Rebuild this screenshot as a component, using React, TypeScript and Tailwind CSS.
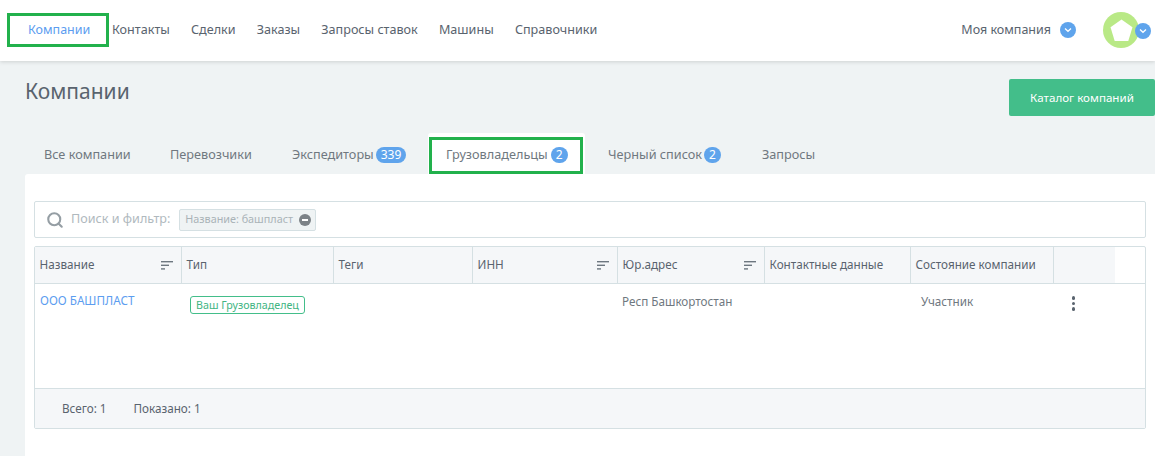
import { Search } from "lucide-react";

const navItems = ["Контакты", "Сделки", "Заказы", "Запросы ставок", "Машины", "Справочники"];

const columns = [
  { title: "Название", width: "w-[147px]", sort: true },
  { title: "Тип", width: "w-[152px]" },
  { title: "Теги", width: "w-[139px]" },
  { title: "ИНН", width: "w-[145px]", sort: true },
  { title: "Юр.адрес", width: "w-[147px]", sort: true },
  { title: "Контактные данные", width: "w-[146px]" },
  { title: "Состояние компании", width: "w-[143px]" },
  { title: "", width: "w-[61px]" },
];

const Badge = ({ value }: { value: string }) => (
  <span className="flex h-[16px] min-w-[16px] items-center justify-center rounded-full bg-[#5fa4ec] px-[5px] text-[12px] leading-none text-white">
    {value}
  </span>
);

const Chevron = ({ className }: { className: string }) => (
  <span className={`flex items-center justify-center rounded-full bg-[#5fa4ec] ${className}`}>
    <svg width="8" height="6" viewBox="0 0 8 6" fill="none" stroke="white" strokeWidth="1.3">
      <path d="M1 1.5 L4 4.3 L7 1.5" />
    </svg>
  </span>
);

const SortIcon = () => (
  <svg width="12" height="9" viewBox="0 0 12 9" fill="#6d7780" className="shrink-0">
    <rect x="0" y="0" width="12" height="1.4" />
    <rect x="0" y="3.6" width="8" height="1.4" />
    <rect x="0" y="7.2" width="4" height="1.4" />
  </svg>
);

export default function App() {
  return (
    <div className="flex h-[456px] w-[1155px] flex-col overflow-hidden bg-[#eff3f4] font-['Noto_Sans',sans-serif] text-[12.5px] text-[#59636e]">
      <header className="relative z-10 flex h-[61px] shrink-0 items-center bg-white pb-[1px] pl-[7px] pr-[4px] shadow-[0_1px_4px_rgba(0,0,0,0.14)]">
        <a className="mr-[3px] flex h-[34px] w-[102px] items-center border-[3px] border-[#22b14c] pl-[18px] text-[#5c9df0]">
          Компании
        </a>
        <nav className="flex items-center gap-[21.2px] text-[12.6px]">
          {navItems.map((item) => (
            <a key={item}>{item}</a>
          ))}
        </nav>
        <div className="ml-auto flex items-center">
          <span>Моя компания</span>
          <Chevron className="ml-[9px] h-[16px] w-[16px]" />
          <div className="ml-[27px] flex h-[36px] w-[36px] items-center justify-center rounded-full bg-[#b9e986]">
            <svg width="23" height="23" viewBox="0 0 22 22" fill="white">
              <path d="M11 0.5 L21.5 8 L17.5 21 L4.5 21 L0.5 8 Z" />
            </svg>
          </div>
          <Chevron className="z-10 -ml-[4px] mt-[2px] h-[16px] w-[16px]" />
        </div>
      </header>

      <main className="flex flex-1 flex-col pl-[25px]">
        <div className="flex h-[72px] shrink-0 items-start justify-between">
          <h1 className="mt-[15px] text-[21px] leading-[30px] text-[#59636e]">Компании</h1>
          <button className="mt-[18px] h-[37px] w-[146px] rounded-[2px] bg-[#43be8a] text-center text-[11.6px] text-white">
            Каталог компаний
          </button>
        </div>

        <div className="flex h-[41px] shrink-0 items-end text-[12.7px] text-[#6f7880]">
          <a className="flex h-[37px] w-[145px] items-center pb-[1px] pl-[19px]">Все компании</a>
          <a className="flex h-[37px] w-[122px] items-center pb-[1px]">Перевозчики</a>
          <a className="flex h-[37px] w-[136px] items-center gap-[2px] pb-[1px]">
            Экспедиторы <Badge value="339" />
          </a>
          <div className="flex h-[41px] w-[157px] items-end rounded-t-[3px] bg-white pl-[1px]">
            <a className="flex h-[37px] w-[154px] items-center gap-[3px] border-[3px] border-[#22b14c] pb-[1px] pl-[14px]">
              Грузовладельцы <Badge value="2" />
            </a>
          </div>
          <a className="flex h-[37px] w-[177px] items-center gap-[2px] pb-[1px] pl-[23px]">
            Черный список <Badge value="2" />
          </a>
          <a className="flex h-[37px] items-center pb-[1px]">Запросы</a>
        </div>

        <section className="flex-1 rounded-tl-[3px] bg-white pl-[9px] pr-[9px] pt-[27px]">
          <div className="flex h-[37px] items-center rounded-[2px] border border-[#d5e0e3] pl-[11px] text-[12.6px]">
            <Search size={18} strokeWidth={2.8} className="text-[#959ea4]" />
            <span className="ml-[7px] text-[#b0b9be]">Поиск и фильтр:</span>
            <span className="ml-[9px] flex h-[22px] items-center gap-[6px] rounded-[2px] border border-[#d5e0e3] bg-[#eff3f4] pl-[5px] pr-[4px] text-[10.8px] text-[#a9b2b7]">
              Название: башпласт
              <span className="flex h-[12px] w-[12px] items-center justify-center rounded-full bg-[#7c8287]">
                <span className="h-[2px] w-[6px] bg-white" />
              </span>
            </span>
          </div>

          <div className="mt-[8px] flex h-[183px] flex-col rounded-[2px] border border-[#d5e0e3]">
            <div className="flex h-[37px] shrink-0 border-b border-[#d5e0e3] text-[11.7px] text-[#59636e]">
              {columns.map((col) => (
                <div
                  key={col.title || "actions"}
                  className={`flex items-center justify-between border-r border-[#d5e0e3] bg-[#f5f7f9] pl-[4.6px] pr-[8px] last:border-r-0 ${col.width}`}
                >
                  <span>{col.title}</span>
                  {col.sort && <SortIcon />}
                </div>
              ))}
            </div>

            <div className="flex flex-1 text-[11.7px]">
              <div className="w-[147px] pl-[5px] pt-[8px] text-[#5c9df0]">ООО БАШПЛАСТ</div>
              <div className="w-[152px] pl-[8px] pt-[12px]">
                <span className="inline-flex h-[18px] items-center rounded-[3px] border border-[#43be8a] px-[5px] text-[10.7px] leading-none text-[#3fb583]">
                  Ваш Грузовладелец
                </span>
              </div>
              <div className="w-[139px]" />
              <div className="w-[145px]" />
              <div className="w-[147px] pl-[4px] pt-[9px] text-[#6f7880]">Респ Башкортостан</div>
              <div className="w-[146px]" />
              <div className="w-[143px] pl-[10px] pt-[9px] text-[#6f7880]">Участник</div>
              <div className="flex w-[39px] flex-col items-center gap-[2px] pt-[12px]">
                <span className="h-[3.5px] w-[3.5px] rounded-full bg-[#59636e]" />
                <span className="h-[3.5px] w-[3.5px] rounded-full bg-[#59636e]" />
                <span className="h-[3.5px] w-[3.5px] rounded-full bg-[#59636e]" />
              </div>
            </div>

            <div className="flex h-[40px] shrink-0 items-center gap-[27px] border-t border-[#d5e0e3] bg-[#f5f7f9] pl-[27px] text-[11.7px]">
              <span>Всего: 1</span>
              <span>Показано: 1</span>
            </div>
          </div>
        </section>
      </main>
    </div>
  );
}
